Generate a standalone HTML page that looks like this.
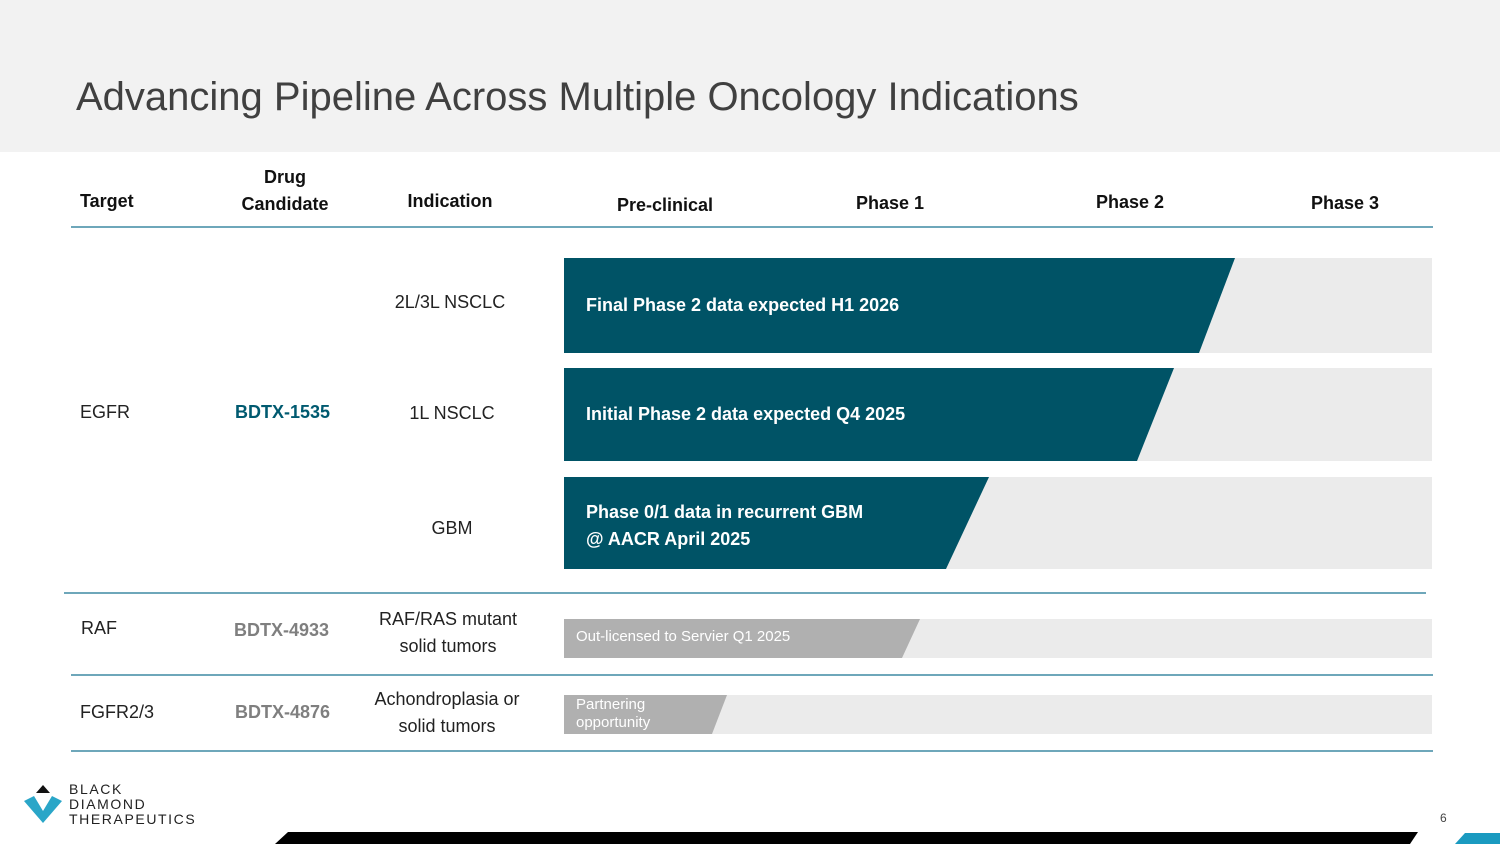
<!DOCTYPE html>
<html><head><style>
body{margin:0;width:1500px;height:844px;position:relative;background:#fff;font-family:"Liberation Sans",sans-serif;overflow:hidden}
.t{position:absolute;white-space:nowrap}
.h{font-weight:bold;font-size:18px;color:#111;text-align:center}
.c{font-size:18px;color:#222;text-align:center}
.w{color:#fff;font-weight:bold;font-size:18px}
</style></head><body>
<div style="position:absolute;left:0;top:0;width:1500px;height:152px;background:#f2f2f2"></div>
<div class="t" style="left:76px;top:75px;font-size:40px;color:#404040">Advancing Pipeline Across Multiple Oncology Indications</div>
<svg style="position:absolute;left:0;top:0" width="1500" height="844">
<g fill="#ebebeb"><rect x="564" y="258" width="868" height="95"/><rect x="564" y="368" width="868" height="93"/><rect x="564" y="477" width="868" height="92"/><rect x="564" y="619" width="868" height="39"/><rect x="564" y="695" width="868" height="39"/></g>
<g fill="#005366"><polygon points="564,258 1235,258 1199,353 564,353"/><polygon points="564,368 1174,368 1137,461 564,461"/><polygon points="564,477 989,477 946,569 564,569"/></g>
<g fill="#b0b0b0"><polygon points="564,619 920,619 902,658 564,658"/><polygon points="564,695 727,695 712,734 564,734"/></g>
<g stroke="#3f8aa3" stroke-width="1.5"><line x1="71" y1="227" x2="1433" y2="227"/><line x1="64" y1="593" x2="1426" y2="593"/><line x1="71" y1="675" x2="1433" y2="675"/><line x1="71" y1="751" x2="1433" y2="751"/></g>
<polygon points="288,832 1418,832 1410,844 275,844" fill="#000"/>
<polygon points="1465,833 1500,833 1500,844 1455,844" fill="#1a9ac0"/>
<polygon points="43,785 36,793 50,793" fill="#111"/>
<polygon points="24,801 34,796 43,811 52,796 62,801 43,823" fill="#2aa6c8"/>
</svg>
<div class="t" style="left:69px;top:782px;font-size:14px;line-height:15px;color:#222;letter-spacing:1.6px">BLACK<br>DIAMOND<br>THERAPEUTICS</div>
<div class="t" style="left:1440px;top:811px;font-size:12px;color:#444">6</div>
<div class="t h" style="left:80px;top:191px;text-align:left">Target</div>
<div class="t h" style="left:230px;top:164px;width:110px;line-height:27px">Drug<br>Candidate</div>
<div class="t h" style="left:400px;top:191px;width:100px">Indication</div>
<div class="t h" style="left:610px;top:195px;width:110px">Pre-clinical</div>
<div class="t h" style="left:840px;top:193px;width:100px">Phase 1</div>
<div class="t h" style="left:1080px;top:192px;width:100px">Phase 2</div>
<div class="t h" style="left:1295px;top:193px;width:100px">Phase 3</div>
<div class="t c" style="left:80px;top:402px;text-align:left">EGFR</div>
<div class="t" style="left:235px;top:402px;font-size:18px;font-weight:bold;color:#005a70">BDTX-1535</div>
<div class="t c" style="left:390px;top:292px;width:120px">2L/3L NSCLC</div>
<div class="t c" style="left:392px;top:403px;width:120px">1L NSCLC</div>
<div class="t c" style="left:392px;top:518px;width:120px">GBM</div>
<div class="t w" style="left:586px;top:295px">Final Phase 2 data expected H1 2026</div>
<div class="t w" style="left:586px;top:404px">Initial Phase 2 data expected Q4 2025</div>
<div class="t w" style="left:586px;top:499px;line-height:27px">Phase 0/1 data in recurrent GBM<br>@ AACR April 2025</div>
<div class="t c" style="left:81px;top:618px;text-align:left">RAF</div>
<div class="t" style="left:234px;top:620px;font-size:18px;font-weight:bold;color:#7f7f7f">BDTX-4933</div>
<div class="t c" style="left:368px;top:606px;width:160px;line-height:27px">RAF/RAS mutant<br>solid tumors</div>
<div class="t" style="left:576px;top:628px;font-size:15px;color:#fff">Out-licensed to Servier Q1 2025</div>
<div class="t c" style="left:80px;top:702px;text-align:left">FGFR2/3</div>
<div class="t" style="left:235px;top:702px;font-size:18px;font-weight:bold;color:#7f7f7f">BDTX-4876</div>
<div class="t c" style="left:362px;top:686px;width:170px;line-height:27px">Achondroplasia or<br>solid tumors</div>
<div class="t" style="left:576px;top:696px;font-size:15px;line-height:18px;color:#fff">Partnering<br>opportunity</div>
</body></html>
